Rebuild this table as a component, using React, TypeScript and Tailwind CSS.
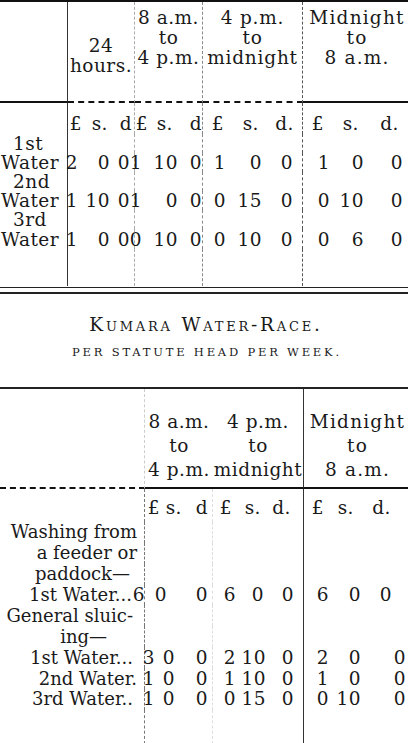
import { twMerge } from "tailwind-merge";

type Cell = string | [string, string];

const TOP_GRID =
  "grid grid-cols-[68px_12px_33px_22px_9px_35px_24px_24px_36px_40px_28px_33px_44px]";
const LOW_GRID =
  "grid grid-cols-[145px_12px_20px_36px_25px_29px_37px_27px_31px_46px]";

// per-column classes, index 0 is the label column
const topCol = [
  "justify-start border-r border-[#333]",
  "pr-[2px]",
  "pr-[3px]",
  "pr-[4px] border-r border-dashed border-[#aaa]",
  "pr-[2px]",
  "pr-[1px]",
  "pr-0 border-r border-dashed border-[#888]",
  "pr-[1px]",
  "pr-[1px]",
  "pr-[9px] border-r border-dashed border-[#555]",
  "pr-[1px]",
  "pr-0",
  "pr-[5px]",
];

const lowCol = [
  "pr-[7px] text-[18px] tracking-[0px] border-r border-dashed border-[#777]",
  "pr-[2px]",
  "pr-[2px]",
  "pr-[4px] border-r border-dashed border-[#ddd]",
  "pr-[2px]",
  "pr-[1px]",
  "pr-[9px] border-r border-[#333]",
  "pr-[2px]",
  "pr-[1px]",
  "pr-[2px]",
];

function Row({ cells, cols, h }: { cells: Cell[]; cols: string[]; h: string }) {
  return (
    <>
      {cells.map((c, i) => {
        const [t, extra] = typeof c === "string" ? [c, ""] : c;
        return (
          <div
            key={i}
            className={twMerge("flex items-center justify-end whitespace-nowrap", h, cols[i], extra)}
          >
            {t}
          </div>
        );
      })}
    </>
  );
}

function Lines({ lines }: { lines: string[] }) {
  return (
    <>
      {lines.map((l) => (
        <div key={l}>{l}</div>
      ))}
    </>
  );
}

const topRows: Cell[][] = [
  [["1st", "pl-[13px]"], "", "", "", "", "", "", "", "", "", "", "", ""],
  [["Water", "pl-[1px]"], "2", "0", "0", "1", "10", "0", "1", "0", "0", "1", "0", "0"],
  [["2nd", "pl-[13px]"], "", "", "", "", "", "", "", "", "", "", "", ""],
  [["Water", "pl-[1px]"], "1", "10", "0", "1", "0", "0", "0", "15", "0", "0", "10", "0"],
  [["3rd", "pl-[13px]"], "", "", "", "", "", "", "", "", "", "", "", ""],
  [["Water", "pl-[1px]"], "1", "0", "0", "0", "10", "0", "0", "10", "0", "0", "6", "0"],
];

const topUnits: Cell[] = [
  "",
  ["£", "pr-0 -mr-[2px]"],
  ["s.", "pr-[5px]"],
  ["d", "pr-[2px]"],
  ["£", "pr-0 -mr-[4px]"],
  ["s.", "pr-[6px]"],
  ["d", "pr-0"],
  ["£", "pr-[3px]"],
  ["s.", "pr-[4px]"],
  ["d.", "pr-[8px]"],
  ["£", "pr-[7px]"],
  ["s.", "pr-[5px]"],
  ["d.", "pr-[9px]"],
];

const lowUnits: Cell[] = [
  "",
  ["£", "pr-0 -mr-[3px]"],
  ["s.", "pr-0 -mr-[5px]"],
  ["d", "pr-[4px]"],
  ["£", "pr-[6px]"],
  ["s.", "pr-[6px]"],
  ["d.", "pr-[12px]"],
  ["£", "pr-[7px]"],
  ["s.", "pr-[8px]"],
  ["d.", "pr-[17px]"],
];

const lowRows: Cell[][] = [
  ["Washing from", "", "", "", "", "", "", "", "", ""],
  ["a feeder or", "", "", "", "", "", "", "", "", ""],
  [["paddock—", "pr-[14px]"], "", "", "", "", "", "", "", "", ""],
  [
    ["1st Water...", "pr-[12px]"],
    ["6", "pr-[13px]"],
    ["0", "pr-[10px]"],
    "0",
    "6",
    ["0", "pr-[3px]"],
    "0",
    "6",
    "0",
    ["0", "pr-[16px]"],
  ],
  [["General sluic-", "pr-[11px]"], "", "", "", "", "", "", "", "", ""],
  [["ing—", "pr-[37px]"], "", "", "", "", "", "", "", "", ""],
  [["1st Water...", "pr-[11px]"], "3", "0", "0", "2", "10", "0", "2", "0", "0"],
  ["2nd Water.", "1", "0", "0", "1", "10", "0", "1", "0", "0"],
  [["3rd Water..", "pr-[11px]"], "1", "0", "0", "0", "15", "0", "0", "10", "0"],
];

const empty13: Cell[] = Array(13).fill("");
const empty10: Cell[] = Array(10).fill("");

export default function App() {
  return (
    <div className="w-[408px] h-[743px] overflow-hidden bg-white text-[#1a1a1a] [font-family:'DejaVu_Serif','Liberation_Serif',serif] text-[18.5px] leading-[20px] tracking-[0.5px]">
      {/* first table */}
      <div className="border-t-2 border-[#111]">
        <div className={TOP_GRID}>
          <div className="h-[101px] border-r border-b-2 border-r-[#333] border-b-[#111]" />
          <div className="col-span-3 h-[101px] pt-[34px] text-center border-r border-dashed border-r-[#aaa] border-b-2 border-b-[#111]">
            <Lines lines={["24", "hours."]} />
          </div>
          <div className="col-span-3 h-[101px] pt-[6px] text-center border-r border-dashed border-r-[#888] border-b-2 border-b-[#111]">
            <Lines lines={["8 a.m.", "to", "4 p.m."]} />
          </div>
          <div className="col-span-3 h-[101px] pt-[6px] text-center tracking-[0.8px] border-r border-dashed border-r-[#555] border-b-2 border-b-[#111]">
            <Lines lines={["4 p.m.", "to", "midnight"]} />
          </div>
          <div className="col-span-3 h-[101px] pt-[6px] pl-[3px] text-center tracking-[1.2px] border-b-2 border-b-[#111]">
            <Lines lines={["Midnight", "to", "8 a.m."]} />
          </div>

          <Row cells={topUnits} cols={topCol} h="h-[30.5px] pt-[11px] leading-[19px]" />
          {topRows.map((r, i) => (
            <Row key={i} cells={r} cols={topCol} h="h-[19.2px] leading-[19px]" />
          ))}
          <Row cells={empty13} cols={topCol} h="h-[37.3px]" />
        </div>
        <div className="mt-[1px] h-[7px] border-t border-b-2 border-[#222]" />
      </div>

      {/* title */}
      <div className="h-[93px] pt-[19px] text-center">
        <div className="pl-[4px] text-[18.5px] leading-[24px] tracking-[2.8px] [font-variant-caps:small-caps]">
          Kumara Water-Race.
        </div>
        <div className="mt-[7px] pl-[6px] text-[11.5px] leading-[16px] tracking-[2.8px] uppercase">
          per statute head per week.
        </div>
      </div>
      <div className="h-[2px] bg-[#222]" />

      {/* second table */}
      <div className={LOW_GRID}>
        <div className="h-[100px] border-r border-dashed border-r-[#ccc] border-b-2 border-b-[#111]" />
        <div className="col-span-3 h-[100px] pt-[21px] leading-[24px] text-center border-b-2 border-b-[#111]">
          <Lines lines={["8 a.m.", "to", "4 p.m."]} />
        </div>
        <div className="col-span-3 h-[100px] pt-[21px] leading-[24px] text-center border-r border-r-[#333] border-b-2 border-b-[#111]">
          <Lines lines={["4 p.m.", "to", "midnight"]} />
        </div>
        <div className="col-span-3 h-[100px] pt-[21px] pl-[3px] leading-[24px] text-center tracking-[1.2px] border-b-2 border-b-[#111]">
          <Lines lines={["Midnight", "to", "8 a.m."]} />
        </div>

        <Row cells={lowUnits} cols={lowCol} h="h-[33px] pt-[5px]" />
        {lowRows.map((r, i) => (
          <Row key={i} cells={r} cols={lowCol} h="h-[20.9px] leading-[20px]" />
        ))}
        <Row cells={empty10} cols={lowCol} h="h-[60px]" />
      </div>
    </div>
  );
}
